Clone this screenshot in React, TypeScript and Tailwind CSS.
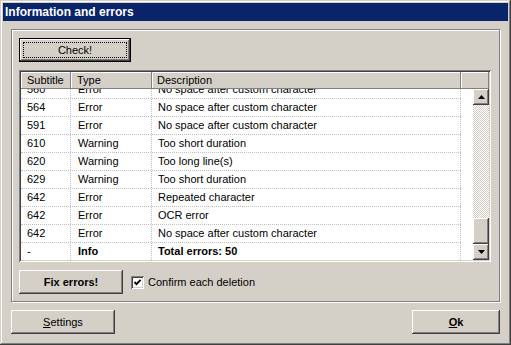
const raised =
  "shadow-[inset_-1px_-1px_0_#404040,inset_1px_1px_0_#ffffff,inset_-2px_-2px_0_#808080,inset_2px_2px_0_#d4d0c8]";
const sunken =
  "shadow-[inset_1px_1px_0_#808080,inset_-1px_-1px_0_#ffffff,inset_2px_2px_0_#404040,inset_-2px_-2px_0_#d4d0c8]";

const rows: [string, string, string][] = [
  ["560", "Error", "No space after custom character"],
  ["564", "Error", "No space after custom character"],
  ["591", "Error", "No space after custom character"],
  ["610", "Warning", "Too short duration"],
  ["620", "Warning", "Too long line(s)"],
  ["629", "Warning", "Too short duration"],
  ["642", "Error", "Repeated character"],
  ["642", "Error", "OCR error"],
  ["642", "Error", "No space after custom character"],
];

function Arrow({ up }: { up?: boolean }) {
  return (
    <svg width="7" height="4" viewBox="0 0 7 4">
      <path d={up ? "M3.5 0 L7 4 L0 4 Z" : "M0 0 L7 0 L3.5 4 Z"} fill="#000" />
    </svg>
  );
}

function Row({ cells, bold }: { cells: [string, string, string]; bold?: boolean }) {
  return (
    <div className="flex h-[18px] border-b border-dotted border-[#c0c0c0]">
      <div className="w-[50px] pl-[6px] flex items-center border-r border-dotted border-[#c0c0c0]">
        {cells[0]}
      </div>
      <div
        className={`w-[81px] pl-[7px] flex items-center border-r border-dotted border-[#c0c0c0] ${
          bold ? "font-bold" : ""
        }`}
      >
        {cells[1]}
      </div>
      <div
        className={`w-[309px] pl-[6px] flex items-center border-r border-dotted border-[#c0c0c0] whitespace-nowrap ${
          bold ? "font-bold" : ""
        }`}
      >
        {cells[2]}
      </div>
    </div>
  );
}

export default function App() {
  return (
    <div
      className={`w-[511px] h-[345px] bg-[#d4d0c8] p-[3px] flex flex-col text-[11px] text-black font-['Liberation_Sans',Arial,sans-serif] shadow-[inset_-1px_-1px_0_#404040,inset_1px_1px_0_#d4d0c8,inset_-2px_-2px_0_#808080,inset_2px_2px_0_#ffffff]`}
    >
      {/* title bar */}
      <div className="h-[18px] bg-[#0a246a] pl-[2px] flex items-center text-white font-bold text-[12px]">
        Information and errors
      </div>

      <div className="flex-1 flex flex-col px-[8px] pt-[8px] pb-[8px]">
        {/* group box */}
        <div className="h-[273px] border border-[#808080] shadow-[1px_1px_0_#ffffff,inset_1px_1px_0_#ffffff] pt-[8px] pl-[7px] pr-[8px] flex flex-col">
          <button
            className={`w-[112px] h-[24px] border border-black bg-[#d4d0c8] p-[3px] flex ${raised}`}
          >
            <span className="flex-1 border border-dotted border-black flex items-center justify-center">
              Check!
            </span>
          </button>

          {/* list */}
          <div className={`mt-[8px] w-[472px] h-[192px] bg-white p-[2px] flex flex-col ${sunken}`}>
            <div className="h-[17px] flex bg-[#d4d0c8] shrink-0">
              <div className="w-[50px] pl-[6px] flex items-center shadow-[inset_-1px_-1px_0_#808080,inset_1px_1px_0_#ffffff]">
                Subtitle
              </div>
              <div className="w-[81px] pl-[6px] flex items-center shadow-[inset_-1px_-1px_0_#808080,inset_1px_1px_0_#ffffff]">
                Type
              </div>
              <div className="w-[309px] pl-[5px] flex items-center shadow-[inset_-1px_-1px_0_#808080,inset_1px_1px_0_#ffffff]">
                Description
              </div>
              <div className="flex-1 shadow-[inset_-1px_-1px_0_#808080,inset_1px_1px_0_#ffffff]" />
            </div>
            <div className="flex-1 flex overflow-hidden">
              <div className="w-[440px] overflow-hidden">
                <div className="-mt-[8px]">
                  {rows.map((r, i) => (
                    <Row key={i} cells={r} />
                  ))}
                  <Row cells={["-", "Info", "Total errors: 50"]} bold />
                </div>
              </div>
              <div className="w-[12px]" />
              {/* scrollbar */}
              <div className="w-[16px] flex flex-col">
                <div className={`h-[16px] bg-[#d4d0c8] flex items-center justify-center ${raised}`}>
                  <Arrow up />
                </div>
                <div className="flex-1 bg-[conic-gradient(#ffffff_25%,#d4d0c8_0_50%,#ffffff_0_75%,#d4d0c8_0)] bg-[length:2px_2px]" />
                <div className={`h-[26px] bg-[#d4d0c8] ${raised}`} />
                <div className={`h-[16px] bg-[#d4d0c8] flex items-center justify-center ${raised}`}>
                  <Arrow />
                </div>
              </div>
            </div>
          </div>

          <div className="mt-[8px] flex items-center">
            <button className={`w-[104px] h-[24px] bg-[#d4d0c8] font-bold ${raised}`}>Fix errors!</button>
            <div className={`ml-[8px] w-[13px] h-[13px] bg-white flex items-center justify-center ${sunken}`}>
              <svg width="9" height="9" viewBox="0 0 9 9">
                <path d="M1.5 4 L3.5 6.2 L7.6 1.8" stroke="#000" strokeWidth="1.9" fill="none" />
              </svg>
            </div>
            <span className="ml-[4px]">Confirm each deletion</span>
          </div>
        </div>

        <div className="mt-[8px] flex justify-between">
          <button className={`w-[104px] h-[24px] bg-[#d4d0c8] ${raised}`}>
            <span className="underline">S</span>ettings
          </button>
          <button className={`w-[88px] h-[24px] bg-[#d4d0c8] font-bold ${raised}`}>
            <span className="underline">O</span>k
          </button>
        </div>
      </div>
    </div>
  );
}
